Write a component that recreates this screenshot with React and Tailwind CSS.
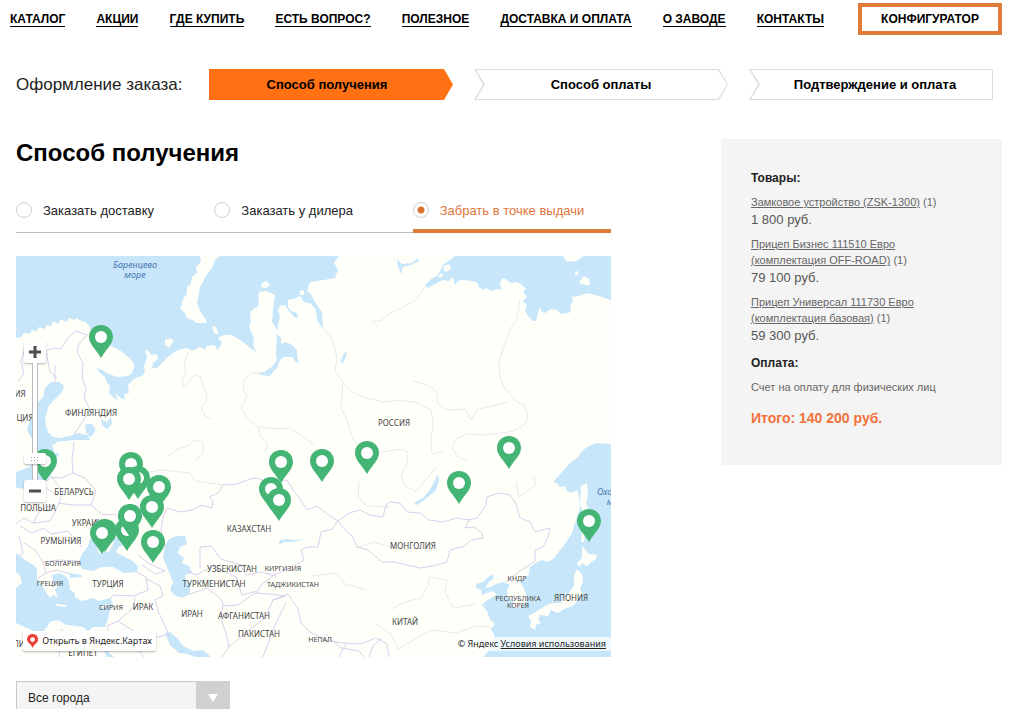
import { useState } from "react";

const MAP_WIDTH = 595;
const MAP_HEIGHT = 401;

const navLinks = [
  "КАТАЛОГ",
  "АКЦИИ",
  "ГДЕ КУПИТЬ",
  "ЕСТЬ ВОПРОС?",
  "ПОЛЕЗНОЕ",
  "ДОСТАВКА И ОПЛАТА",
  "О ЗАВОДЕ",
  "КОНТАКТЫ",
];

const methods = [
  { id: "delivery", title: "Заказать доставку" },
  { id: "dealer", title: "Заказать у дилера" },
  { id: "pickup", title: "Забрать в точке выдачи" },
];

const products = [
  { name: "Замковое устройство (ZSK-1300)", count: 1, price: "1 800 руб." },
  { name: "Прицеп Бизнес 111510 Евро (комплектация OFF-ROAD)", count: 1, price: "79 100 руб." },
  { name: "Прицеп Универсал 111730 Евро (комплектация базовая)", count: 1, price: "59 300 руб." },
];

// Tip of every pin, in map units
const pins = [
  [85, 102], [29, 226], [115, 229], [122, 243], [113, 244], [143, 252],
  [136, 272], [111, 295], [114, 281], [89, 296], [86, 298], [137, 307],
  [265, 227], [255, 254], [263, 265], [306, 226], [351, 218], [443, 248],
  [493, 213], [573, 286],
];

// Centre of every label, in map units
const countries = [
  { name: "ФИНЛЯНДИЯ", x: 75, y: 157 },
  { name: "РОССИЯ", x: 378, y: 167 },
  { name: "БЕЛАРУСЬ", x: 58, y: 236 },
  { name: "ПОЛЬША", x: 22, y: 252 },
  { name: "УКРАИНА", x: 74, y: 267 },
  { name: "РУМЫНИЯ", x: 45, y: 285 },
  { name: "БОЛГАРИЯ", x: 47, y: 307, small: true },
  { name: "ГРЕЦИЯ", x: 34, y: 327, small: true },
  { name: "ТУРЦИЯ", x: 92, y: 328 },
  { name: "СИРИЯ", x: 95, y: 351, small: true },
  { name: "ИРАК", x: 127, y: 351 },
  { name: "ИРАН", x: 176, y: 358 },
  { name: "КАЗАХСТАН", x: 233, y: 273 },
  { name: "УЗБЕКИСТАН", x: 216, y: 313 },
  { name: "КИРГИЗИЯ", x: 267, y: 312, small: true },
  { name: "ТУРКМЕНИСТАН", x: 198, y: 328 },
  { name: "ТАДЖИКИСТАН", x: 277, y: 328, small: true },
  { name: "АФГАНИСТАН", x: 228, y: 360 },
  { name: "ПАКИСТАН", x: 243, y: 378 },
  { name: "НЕПАЛ", x: 304, y: 383, small: true },
  { name: "КИТАЙ", x: 389, y: 366 },
  { name: "МОНГОЛИЯ", x: 397, y: 290 },
  { name: "КНДР", x: 501, y: 322, small: true },
  { name: "РЕСПУБЛИКА", x: 502, y: 342, small: true },
  { name: "КОРЕЯ", x: 502, y: 349, small: true },
  { name: "ЯПОНИЯ", x: 555, y: 342 },
  { name: "ЕГИПЕТ", x: 67, y: 397 },
  { name: "ИЯ", x: 4, y: 138 },
  { name: "ЦИЯ", x: 9, y: 162 },
  { name: "ЛИ", x: 3, y: 388 },
];

const place = (x, y) => ({
  left: `${(x / MAP_WIDTH) * 100}%`,
  top: `${(y / MAP_HEIGHT) * 100}%`,
});

const Header = () => (
  <header className="flex items-center pl-[10px] pr-[22px] pt-[3px]">
    <nav className="flex flex-1 justify-between">
      {navLinks.map((link) => (
        <a
          key={link}
          href="#"
          className="whitespace-nowrap border-b border-black pt-px text-[12px] leading-[13px] font-bold"
        >
          {link}
        </a>
      ))}
    </nav>
    <a
      href="#"
      className="ml-[34px] w-36 border-4 border-[#e07c3a] text-center text-[12px] leading-6 font-bold"
    >
      КОНФИГУРАТОР
    </a>
  </header>
);

const Steps = () => (
  <div className="mt-[34px] flex items-center pl-4 pr-[31px]">
    <p className="w-[193px] shrink-0 text-[17px] leading-6 text-[#222]">Оформление заказа:</p>
    <ol className="grid flex-1 grid-cols-[244fr_254fr_244fr] gap-[21px] text-center text-[13px] leading-[31px] font-bold">
      <li className="bg-[#ff7113] pr-2 [clip-path:polygon(0_0,calc(100%-9px)_0,100%_50%,calc(100%-9px)_100%,0_100%)]">
        Способ получения
      </li>
      <li className="bg-[#dcdcdc] p-px leading-[29px] [clip-path:polygon(0_0,calc(100%-9px)_0,100%_50%,calc(100%-9px)_100%,0_100%,9px_50%)]">
        <div className="bg-white [clip-path:polygon(1px_0,calc(100%-9px)_0,100%_50%,calc(100%-9px)_100%,1px_100%,10px_50%)]">
          Способ оплаты
        </div>
      </li>
      <li className="bg-[#dcdcdc] p-px leading-[29px] [clip-path:polygon(0_0,100%_0,100%_100%,0_100%,9px_50%)]">
        <div className="bg-white pl-2 [clip-path:polygon(1px_0,100%_0,100%_100%,1px_100%,10px_50%)]">
          Подтверждение и оплата
        </div>
      </li>
    </ol>
  </div>
);

const Methods = () => {
  const [selected, setSelected] = useState("pickup");

  return (
    <div className="mt-[33px] flex">
      {methods.map((method) => (
        <label
          key={method.id}
          className={`flex h-[31px] flex-1 items-start gap-[11px] whitespace-nowrap text-[13px] leading-[17px] ${
            selected === method.id
              ? "border-b-4 border-[#e07c3a] text-[#e0763c]"
              : "border-b border-[#bdbdbd] text-[#222]"
          }`}
        >
          <input
            type="radio"
            name="method"
            checked={selected === method.id}
            onChange={() => setSelected(method.id)}
            className="size-4 appearance-none rounded-full border border-[#cfcfcf] bg-white checked:bg-[radial-gradient(circle,#d9732e_3px,transparent_4px)]"
          />
          {method.title}
        </label>
      ))}
    </div>
  );
};

const Terrain = () => (
  <svg
    viewBox={`0 0 ${MAP_WIDTH} ${MAP_HEIGHT}`}
    className="block w-full"
    strokeLinejoin="round"
    aria-hidden="true"
  >
    <rect width={MAP_WIDTH} height={MAP_HEIGHT} fill="#fffffa" />
    <g fill="#c8e6f9">
      {/* Barents and Kara seas */}
      <path d="M0 0V82L5 81 8 77 14 78 16 74 21 75 23 71 29 73 31 69 35 70 37 65 42 68 45 63 50 66 53 62 58 64 61 62 65 65 70 66 73 70 76 76 84 83 97 91 105 95 112 101 117 106 118 111 116 117 112 120 101 121 91 117 86 114 80 112 84 117 89 121 91 127 94 130 93 137 98 142 102 144 99 137 105 142 109 144 108 138 113 137 112 129 117 124 122 121 126 120 129 116 128 110 131 101 129 94 133 95 135 99 141 98 142 103 137 107 136 112 141 112 146 107 154 99 162 94 171 92 176 95 184 91 189 94 191 90 198 89 202 94 206 87 202 82 208 79 216 79 227 86 234 92 240 96 237 89 238 82 233 71 235 65 234 57 238 52 242 51 243 36 250 35 259 39 257 54 256 66 261 74 260 97 261 104 257 110 254 112 248 116 242 116 244 119 254 120 257 116 261 112 263 106 267 101 277 101 279 106 283 107 281 100 281 94 275 88 268 86 265 89 265 82 261 78 262 70 264 61 262 54 264 50 269 49 273 55 278 61 282 62 281 57 275 55 272 51 272 44 280 42 284 40 288 46 294 47 300 54 301 64 307 73 306 56 299 46 295 38 291 35 294 26 308 24 319 22 322 14 318 7 323 0Z" />
      {/* Laptev sea */}
      <path d="M439 0L427 9 424 15 422 19 415 23 409 29 412 32 419 28 427 24 433 25 437 21 439 29 442 25 447 24 456 25 461 26 463 31 467 34 470 32 476 35 481 33 485 34 484 26 487 22 491 24 495 27 500 26 505 28 510 33 507 36 511 41 507 45 511 49 509 54 512 60 517 65 520 65 522 57 524 51 526 56 529 57 535 53 541 54 545 58 551 57 555 56 554 50 557 45 556 41 563 40 571 37 583 40 595 44V0H568L559 6 555 5 551 6 547 0Z" />
      {/* Okhotsk, Japan and Yellow seas */}
      <path d="M595 188L581 187 573 190 567 194 562 201 554 207 546 216 537 226 541 227 544 231 549 230 551 235 556 237 561 234 563 241 564 251 561 261 556 277 549 288 544 294 538 302 532 306 526 304 521 306 514 311 513 318 508 323 504 326 507 331 510 338 511 344 507 349 501 352 496 351 497 344 492 341 491 334 494 329 487 326 480 328 474 331 469 332 473 326 478 322 476 318 471 322 467 326 460 328 460 332 465 334 466 339 471 337 476 335 481 338 475 342 470 345 466 349 471 355 474 364 479 368 475 373 479 381 474 390 471 397 467 401H595Z" />
      {/* Baltic */}
      <path d="M35 126L43 126 48 130 46 136 38 144 32 151 31 157 29 161 30 169 32 176 37 181 44 182 54 180 61 177 72 179 74 184 57 184 41 186 38 190 39 194 43 198 38 205 35 219 29 226 19 228 12 233 0 232V216L13 211 20 204 20 192 16 183 11 174 13 167 16 157 20 149 27 141 29 132Z" />
      <path d="M69 168L76 168 80 174 75 181 70 177ZM85 163L91 166 95 161 96 168 91 173 86 169Z" />
      {/* Black, Azov and Caspian seas */}
      <path d="M74 282L72 290 66 298 63 305 66 313 77 315 86 311 97 311 108 317 121 316 122 310 115 304 107 300 100 296 103 291 113 286 106 279 96 283 91 295 83 298 80 287Z" />
      <path d="M149 289L153 283 160 280 169 280 171 288 164 291 162 297 168 302 166 307 173 310 176 317 169 319 170 325 174 328 174 338 166 342 158 339 154 334 157 326 152 314 147 301Z" />
      {/* Mediterranean */}
      <path d="M0 297L9 304 16 308 21 312 21 323 26 329 31 338 34 342 37 339 42 341 39 334 42 330 37 326 36 319 43 317 51 321 53 326 54 334 59 337 59 341 66 345 77 342 83 345 94 342 97 347 94 354 92 363 89 371 77 371 72 375 67 371 51 369 42 364 34 366 29 374 22 377 11 372 0 367V332L6 327 4 320 0 316Z" />
      <path d="M54 317L65 319 66 321 54 322ZM149 377L154 376 161 382 167 390 177 395 187 394 195 401H180L171 398 163 397 154 389ZM86 390L91 395 98 401H91Z" />
      {/* Baikal, Balkhash and northern lakes */}
      <path d="M422 218L423 225 420 234 411 242 401 249 398 247 407 242 413 235 418 226ZM262 289L264 284 271 283 279 284 289 283 277 286 268 286ZM325 105L328 97 331 96 329 103 326 108ZM381 3L386 8 396 7 402 2 403 5 395 9 387 11 385 18 382 11Z" />
    </g>
    <g fill="#fffffa">
      {/* Islands */}
      <path d="M184 0L185 6 180 11 181 17 176 21 175 28 171 31 171 38 167 43 166 48 164 52 169 57 171 62 177 64 180 67 191 67 189 62 185 57 181 47 184 31 190 20 196 12 199 4 204 0ZM149 84L155 82 158 86 155 88 154 92 149 89ZM196 70L200 71 203 79 198 77ZM246 27L250 25 254 29 250 32 245 31ZM428 10L433 8 435 13 430 16 427 14ZM422 20L426 17 427 20 424 22ZM284 35L288 34 288 39 284 39ZM564 25L568 20 573 23 574 29 569 29 563 27ZM559 16L562 15 562 19 559 19Z" />
      <path d="M565 230L571 227 572 239 570 247 575 260 573 270 569 275 568 286 565 286 567 270 566 254 564 247ZM566 290L573 298 581 299 580 303 574 307 571 310 566 307 563 311 561 307 566 302ZM561 313L566 318 567 326 564 333 566 337 561 345 557 350 548 353 542 357 535 354 532 360 524 359 522 363 525 367 520 369 519 374 514 371 515 365 512 360 518 357 527 351 536 347 544 347 549 341 553 337 558 330 558 320Z" />
      <path d="M40 348L50 349 50 351 41 350ZM85 350L92 348 88 352ZM36 189L46 185 52 186 51 199 44 195 39 198ZM82 286L92 282 98 286 93 296 86 294Z" />
    </g>
    <g fill="none" stroke="#e9e8ec">
      <path d="M172 96L168 107 170 115 166 124 167 131 172 127 178 119 185 121 187 130 191 139 190 147 185 151 189 160 196 164M249 117L235 117 228 124 227 133 231 141 225 152 231 162 243 172 246 171 261 173 274 172 286 180 298 189M243 172L244 180 252 189 249 196" />
      <path d="M409 31L401 43 389 50 376 56 364 65 356 66 361 70M307 73L315 80 318 89 321 102 319 115 327 126 325 152 331 164 337 183 344 192 357 197 372 195 384 193 392 196 391 208 385 219M327 126L336 136 350 142 367 146 382 144 399 146 415 154 417 168 415 184 416 198 428 195" />
      <path d="M397 125L411 129 421 136 422 148 432 154 449 153 455 164 462 153 481 149 492 146M504 44L501 63 495 72 488 90 483 105 484 121 489 133 500 145 509 150 512 162 507 170 497 175 486 177 466 179 451 178 440 183 436 192 441 200 451 205M151 201L162 193 174 189 179 184 187 186 187 198 179 205M114 219L145 214 174 217 179 225 208 229M343 226L342 242 351 250 373 251M385 219L389 230 400 235 407 227 420 211" />
      <path d="M295 320L320 317 329 328 350 334M376 353L389 346 405 342 412 329 413 321 431 324 429 336 437 352 460 348M360 368L374 377 382 393 415 374 440 377 460 370 475 371M500 226L503 241 519 230 518 219M340 292L357 286 380 292" />
    </g>
    <g fill="none" stroke="#d9cfec">
      <path d="M71 79L63 88 61 96 67 107 66 121 70 133 68 141 74 154 65 168 58 178M71 79L60 75 51 83 45 93 38 92 30 95 34 116 41 122M39 109L39 128M2 126L8 117 5 105 10 88" />
      <path d="M58 186L56 204 57 217 69 222 80 235 75 249 87 259 98 258 109 267 120 270M57 217L45 222 35 221 30 226M35 221L47 235 42 250 34 265 17 267 8 262 0 268M42 247L56 249 75 249M16 230L31 232 39 238M4 270L16 277 28 272 35 278 52 275 58 282 66 291M7 286L19 294 27 306 43 304 62 305M3 280L7 297 0 303M27 306L30 317 22 322M30 317L41 314 54 318M17 268L22 257 31 251 40 249" />
      <path d="M147 261L151 252 164 256 177 254 185 249 196 252 197 245 193 241 202 237 207 229 221 228 234 223 241 222 250 226 271 224 277 234 284 243 291 254 301 250 311 258 322 265 333 257 344 254 354 259 367 261 370 249 374 246 384 247 391 256 404 257 413 264 427 266 441 262 453 264 461 262 470 249 471 241 483 237 494 239 500 248 504 262 514 266 519 276 534 272 532 281 527 291 519 294 519 305 504 315 490 326M147 261L145 274 149 289" />
      <path d="M322 265L329 274 336 280 341 291 352 294 366 306 378 306 404 312 417 310 431 306 434 294 449 290 455 284 467 282 466 277 458 271 449 272 454 263M322 265L316 273 305 276 302 291 291 291 285 294 288 304 274 312 258 319 245 329 241 337M184 312L184 291 195 290 205 303 225 309 230 319 245 316 260 320M171 315L180 319 197 310 220 321 226 339 241 335" />
      <path d="M122 299L132 307 149 315 139 318 126 309M121 316L130 321 132 334 118 340 97 339 93 345M131 323L144 330 147 340 139 344M139 344L143 357 150 372 153 381M119 342L117 352 102 365 91 370M102 365L119 376 130 384 153 378M91 370L95 383 107 375 128 401M46 373L43 401M174 338L191 332 203 341 207 347 205 363 210 377 213 391 206 401M207 350L222 349 239 337 254 338 270 340 257 344 249 362 229 377 213 391M257 344L272 338 282 353 285 367 294 376 312 385 328 387 344 388 360 382 371 388 373 401M270 347L259 369 254 382 247 401M309 378L325 392 343 395 348 401M323 401L330 388M353 401L357 390 366 382" />
    </g>
  </svg>
);

const Pin = ({ x, y }) => (
  <svg
    viewBox="0 0 24 33"
    className="absolute w-6 -translate-x-1/2 -translate-y-full"
    style={place(x, y)}
    aria-hidden="true"
  >
    <path
      d="M12 0C5 0 0 5 0 12C0 19 6 23 12 33C18 23 24 19 24 12C24 5 19 0 12 0Z"
      fill="#45b575"
    />
    <circle cx="12" cy="12" r="6" fill="#fff" />
  </svg>
);

const PickupMap = () => {
  const [zoom, setZoom] = useState(15);

  return (
    <div className="relative mt-[23px] overflow-hidden font-['Noto_Sans',sans-serif]">
      <Terrain />

      {countries.map(({ name, x, y, small }) => (
        <span
          key={name}
          className={`absolute -translate-x-1/2 -translate-y-1/2 leading-none text-[#444] ${
            small ? "text-[7px]" : "text-[8px]"
          }`}
          style={place(x, y)}
        >
          {name}
        </span>
      ))}
      <span
        className="absolute -translate-x-1/2 -translate-y-1/2 text-center text-[9px] leading-[10px] text-[#4a78b5] italic"
        style={place(119, 14)}
      >
        Баренцево
        <br />
        море
      </span>
      <span
        className="absolute -translate-y-1/2 text-center text-[9px] leading-[10px] text-[#4a78b5] italic"
        style={place(581, 241)}
      >
        Охотское
        <br />
        море
      </span>

      {pins.map(([x, y]) => (
        <Pin key={`${x}-${y}`} x={x} y={y} />
      ))}

      {/* Zoom control */}
      <div className="absolute top-[85px] left-2 flex w-[22px] flex-col items-center">
        <button
          type="button"
          aria-label="Приблизить"
          onClick={() => setZoom(Math.min(100, zoom + 10))}
          className="flex size-[22px] items-center justify-center rounded-xs bg-white shadow-[0_1px_2px_rgba(0,0,0,0.3)]"
        >
          <svg viewBox="0 0 12 12" className="size-3" stroke="#4d4d4d" strokeWidth="3">
            <path d="M6 0V12M0 6H12" />
          </svg>
        </button>
        <input
          type="range"
          aria-label="Масштаб"
          value={zoom}
          onChange={(e) => setZoom(Number(e.target.value))}
          className="h-[117px] w-[22px] appearance-none bg-[linear-gradient(90deg,transparent_8px,#b9b9b9_8px,#b9b9b9_9px,#fff_9px,#fff_13px,#b9b9b9_13px,#b9b9b9_14px,transparent_14px)] [direction:rtl] [writing-mode:vertical-lr] [&::-webkit-slider-thumb]:h-[11px] [&::-webkit-slider-thumb]:w-[22px] [&::-webkit-slider-thumb]:appearance-none [&::-webkit-slider-thumb]:rounded-xs [&::-webkit-slider-thumb]:bg-white [&::-webkit-slider-thumb]:bg-[linear-gradient(90deg,#fff_6px,transparent_6px,transparent_16px,#fff_16px),linear-gradient(#fff_3px,transparent_3px,transparent_8px,#fff_8px),radial-gradient(circle_at_center,#aaa_1px,transparent_1px)] [&::-webkit-slider-thumb]:bg-[length:100%_100%,100%_100%,3px_3px] [&::-webkit-slider-thumb]:shadow-[0_1px_2px_rgba(0,0,0,0.3)]"
        />
        <button
          type="button"
          aria-label="Отдалить"
          onClick={() => setZoom(Math.max(0, zoom - 10))}
          className="flex size-[22px] items-center justify-center rounded-xs bg-white shadow-[0_1px_2px_rgba(0,0,0,0.3)]"
        >
          <svg viewBox="0 0 12 12" className="size-3" stroke="#4d4d4d" strokeWidth="3">
            <path d="M0 6H12" />
          </svg>
        </button>
      </div>

      <a
        href="#"
        className="absolute bottom-[6px] left-[7px] flex h-5 items-center gap-1 rounded-xs bg-white px-1 text-[9px] text-[#222] shadow-[0_1px_2px_rgba(0,0,0,0.3)]"
      >
        <svg viewBox="0 0 24 30" className="h-[14px]" aria-hidden="true">
          <path
            d="M12 0C5 0 0 5 0 12C0 19 9 21 12 30C15 21 24 19 24 12C24 5 19 0 12 0Z"
            fill="#e9413a"
          />
          <circle cx="12" cy="12" r="5" fill="#fff" />
        </svg>
        Открыть в Яндекс.Картах
      </a>
      <p className="absolute right-0 bottom-[6px] bg-white/70 px-[5px] text-[9px] leading-[14px] text-[#222]">
        © Яндекс{" "}
        <a href="#" className="underline">
          Условия использования
        </a>
      </p>
    </div>
  );
};

const CitySelect = () => (
  <div className="relative mt-6 w-[214px]">
    <select
      aria-label="Город"
      className="h-[34px] w-full appearance-none border border-[#c9c9c9] bg-[#f4f4f4] pl-[11px] text-[12px] text-[#222]"
    >
      <option>Все города</option>
    </select>
    <span className="pointer-events-none absolute inset-y-0 right-0 flex w-[34px] items-center justify-center bg-[#d0d0d0]">
      <svg viewBox="0 0 10 8" className="w-[10px]" aria-hidden="true">
        <path d="M0 0H10L5 8Z" fill="#fff" />
      </svg>
    </span>
  </div>
);

const OrderSummary = () => (
  <aside className="mt-[39px] bg-[#f4f4f4] pt-[30px] pr-12 pb-[37px] pl-[30px] text-[11px] leading-4 text-[#666]">
    <h2 className="text-[12px] leading-[18px] font-bold text-[#222]">Товары:</h2>
    <ul>
      {products.map((product) => (
        <li key={product.name} className="mt-[7px]">
          <p>
            <a href="#" className="underline">
              {product.name}
            </a>{" "}
            ({product.count})
          </p>
          <p className="mt-px text-[13px] leading-[18px] text-[#555]">{product.price}</p>
        </li>
      ))}
    </ul>
    <h2 className="mt-[9px] text-[12px] leading-[18px] font-bold text-[#222]">Оплата:</h2>
    <p className="mt-[7px] whitespace-nowrap">Счет на оплату для физических лиц</p>
    <p className="mt-[13px] text-[14px] leading-5 font-bold text-[#f2723c]">Итого: 140 200 руб.</p>
  </aside>
);

const App = () => {
  return (
    <div className="bg-white font-['Liberation_Sans',Arial,sans-serif] text-black">
      <Header />
      <Steps />
      <main className="grid grid-cols-[595fr_281fr] items-start gap-[110px] pl-4 pr-[22px]">
        <section>
          <h1 className="mt-[37px] text-[24px] leading-8 font-bold">Способ получения</h1>
          <Methods />
          <PickupMap />
          <CitySelect />
        </section>
        <OrderSummary />
      </main>
    </div>
  );
};

export default App;
